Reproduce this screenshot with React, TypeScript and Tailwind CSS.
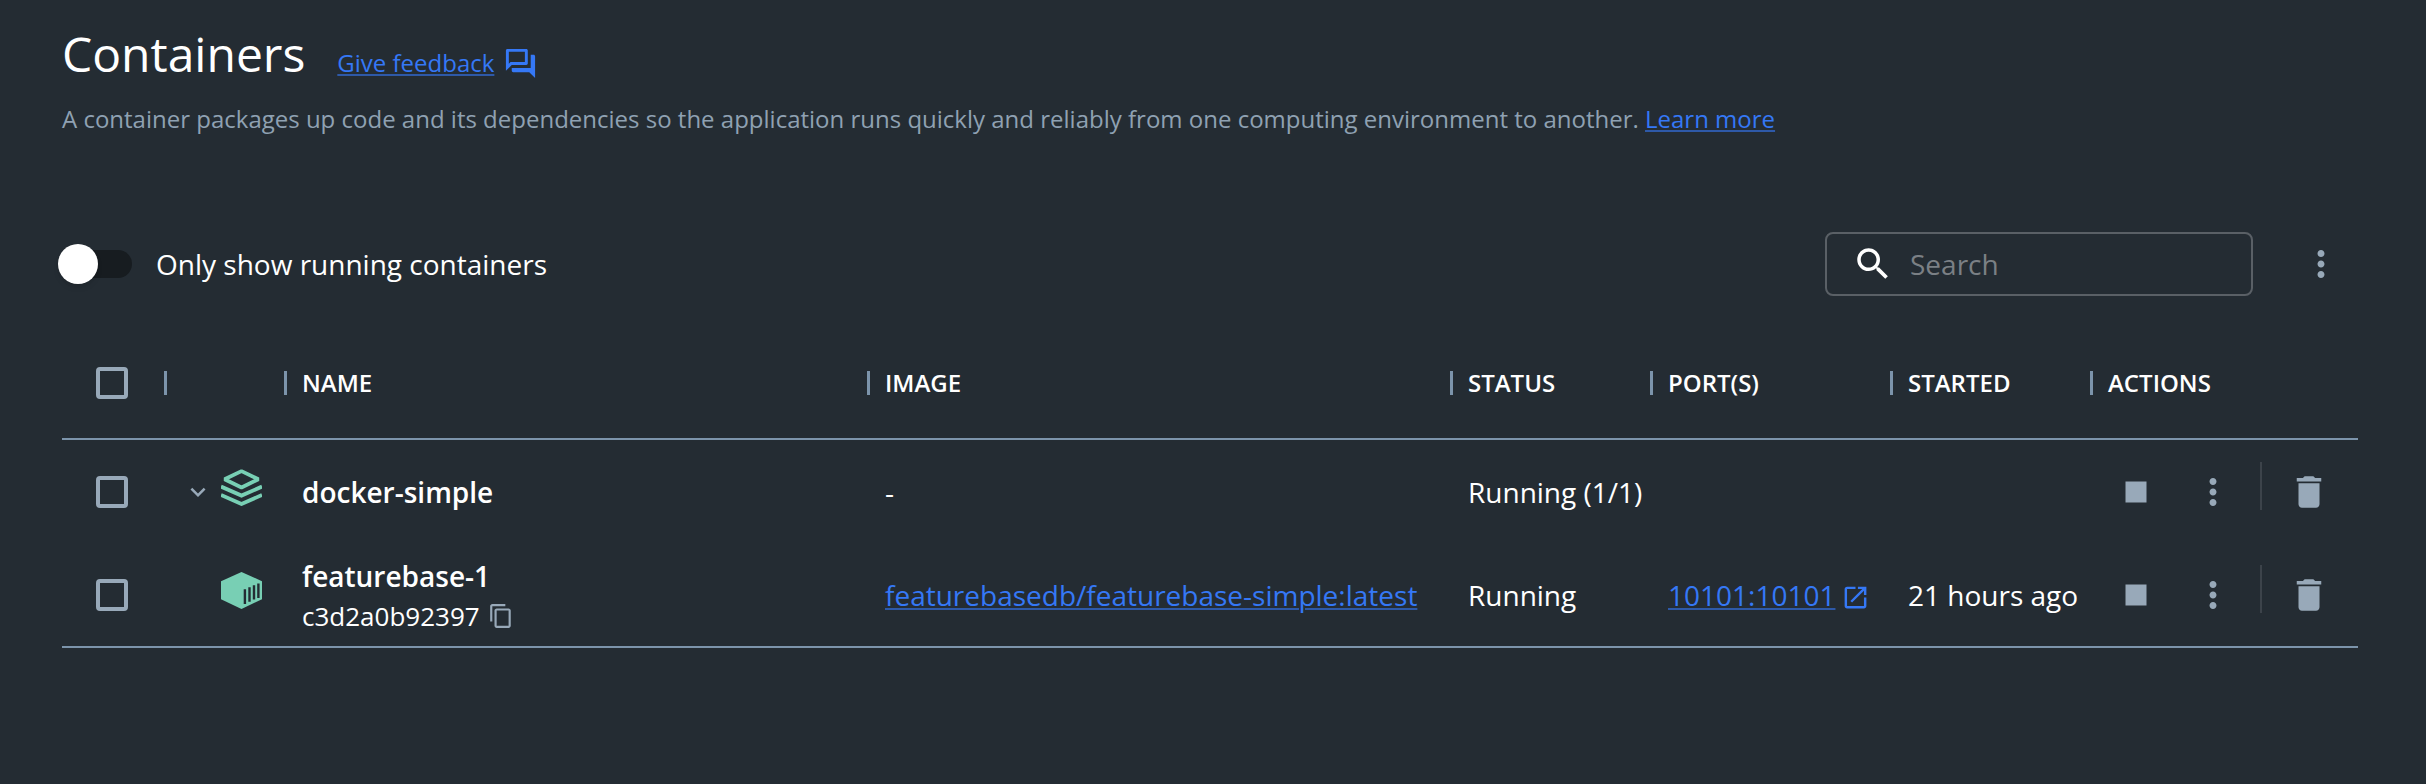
import { useState } from "react";
import type { ReactNode } from "react";

const paths = {
  forum:
    "M15 4v7H5.17L4 12.17V4h11m1-2H3c-.55 0-1 .45-1 1v14l4-4h10c.55 0 1-.45 1-1V3c0-.55-.45-1-1-1zm5 4h-2v9H6v2c0 .55.45 1 1 1h11l4 4V7c0-.55-.45-1-1-1z",
  search:
    "M15.5 14h-.79l-.28-.27C15.41 12.59 16 11.11 16 9.5 16 5.91 13.09 3 9.5 3S3 5.91 3 9.5 5.91 16 9.5 16c1.61 0 3.09-.59 4.23-1.57l.27.28v.79l5 4.99L20.49 19l-4.99-5zm-6 0C7.01 14 5 11.99 5 9.5S7.01 5 9.5 5 14 7.01 14 9.5 11.99 14 9.5 14z",
  more: "M12 8c1.1 0 2-.9 2-2s-.9-2-2-2-2 .9-2 2 .9 2 2 2zm0 2c-1.1 0-2 .9-2 2s.9 2 2 2 2-.9 2-2-.9-2-2-2zm0 6c-1.1 0-2 .9-2 2s.9 2 2 2 2-.9 2-2-.9-2-2-2z",
  stop: "M6 6h12v12H6z",
  trash: "M6 19c0 1.1.9 2 2 2h8c1.1 0 2-.9 2-2V7H6v12zM19 4h-3.5l-1-1h-5l-1 1H5v2h14V4z",
  chevron: "M16.59 8.59 12 13.17 7.41 8.59 6 10l6 6 6-6z",
  copy: "M16 1H4c-1.1 0-2 .9-2 2v14h2V3h12V1zm3 4H8c-1.1 0-2 .9-2 2v14c0 1.1.9 2 2 2h11c1.1 0 2-.9 2-2V7c0-1.1-.9-2-2-2zm0 16H8V7h11v14z",
  launch:
    "M19 19H5V5h7V3H5c-1.11 0-2 .9-2 2v14c0 1.1.89 2 2 2h14c1.1 0 2-.9 2-2v-7h-2v7zM14 3v2h3.59l-9.83 9.83 1.41 1.41L19 6.41V10h2V3h-7z",
};

function Icon({ name, className }: { name: keyof typeof paths; className: string }) {
  return (
    <svg viewBox="0 0 24 24" fill="currentColor" aria-hidden="true" className={`shrink-0 ${className}`}>
      <path d={paths[name]} />
    </svg>
  );
}

function ComposeIcon() {
  return (
    <svg viewBox="0 0 41 37" fill="none" stroke="currentColor" strokeWidth="3.8" aria-hidden="true" className="mb-2 h-[37px] w-[41px] shrink-0 text-[#78cfb4]">
      <path d="M20.5 2.1 37.4 10.3 20.5 18.5 3.6 10.3Z" strokeLinejoin="bevel" />
      <path d="M0 17.6 20.5 26.6 41 17.6" />
      <path d="M0 26 20.5 35 41 26" />
    </svg>
  );
}

function ContainerIcon() {
  return (
    <svg viewBox="0 0 41 37" aria-hidden="true" className="mb-2 h-[37px] w-[41px] shrink-0 text-[#78cfb4]">
      <path fill="currentColor" d="M20.5 0 41 9.2V27.2L20.5 37 0 27.2V9.2Z" />
      <path fill="none" stroke="#242c33" strokeWidth="2.4" d="M23.9 17.2V32M28.5 15.2V29.8M33 13.2V27.6M37.4 11.4V26" />
    </svg>
  );
}

function Checkbox({ label }: { label: string }) {
  return (
    <input
      type="checkbox"
      aria-label={label}
      className="block size-8 appearance-none rounded-[4px] border-4 border-[#98a9b9] checked:bg-[#3578f6]"
    />
  );
}

function IconButton({ label, children }: { label: string; children: ReactNode }) {
  return (
    <button type="button" aria-label={label} className="flex shrink-0 items-center text-[#98a9b9]">
      {children}
    </button>
  );
}

function TextLink({ children }: { children: ReactNode }) {
  return (
    <a href="#" className="text-[#3578f6] underline decoration-[#3578f6]/60 decoration-2 underline-offset-2">
      {children}
    </a>
  );
}

function HeaderCell({ children }: { children?: ReactNode }) {
  return (
    <th scope="col" className="h-[112px] border-b-2 border-[#7c94ab] p-0 text-left font-semibold">
      <div className="flex items-center gap-[15px]">
        <span className="h-6 w-[3px] bg-[#7c94ab]" />
        {children}
      </div>
    </th>
  );
}

function Actions({ name }: { name: string }) {
  return (
    <div className="flex items-center pl-[25px]">
      <IconButton label={`Stop ${name}`}>
        <Icon name="stop" className="size-[42px]" />
      </IconButton>
      <div className="ml-[35px] flex">
        <IconButton label={`More actions for ${name}`}>
          <Icon name="more" className="size-[42px]" />
        </IconButton>
      </div>
      <span className="mx-[26px] mb-3 h-12 w-0.5 bg-[#3c434a]" />
      <IconButton label={`Delete ${name}`}>
        <Icon name="trash" className="size-[42px]" />
      </IconButton>
    </div>
  );
}

export default function App() {
  const [onlyRunning, setOnlyRunning] = useState(false);

  return (
    <main className="min-h-screen bg-[#242c33] pt-[26px] pr-[68px] pl-[62px] font-['Open_Sans','Noto_Sans',sans-serif] text-[28px] leading-10 text-white">
      <header>
        <div className="flex items-baseline gap-8">
          <h1 className="text-[48px] leading-[56px]">Containers</h1>
          <div className="flex items-center gap-[9px] text-[24px] leading-8">
            <TextLink>Give feedback</TextLink>
            <Icon name="forum" className="size-[35px] text-[#3578f6]" />
          </div>
        </div>
        <p className="mt-[21px] text-[24px] leading-8 text-[#8fa1b2]">
          A container packages up code and its dependencies so the application runs quickly and reliably from one
          computing environment to another. <TextLink>Learn more</TextLink>
        </p>
      </header>

      <div className="mt-[97px] flex h-16 items-center">
        <label className="flex items-center gap-6">
          <span className="relative flex h-7 w-[70px] items-center rounded-full bg-[#171c20]">
            <input
              type="checkbox"
              role="switch"
              checked={onlyRunning}
              onChange={(e) => setOnlyRunning(e.target.checked)}
              className="peer absolute inset-0 appearance-none"
            />
            <span className="-ml-1 size-10 rounded-full bg-white shadow-md peer-checked:ml-9" />
          </span>
          Only show running containers
        </label>
        <label className="ml-auto flex h-16 w-[428px] items-center gap-4 rounded-lg border-2 border-[#5a6066] pl-[25px]">
          <Icon name="search" className="size-[42px]" />
          <input
            type="search"
            aria-label="Search"
            placeholder="Search"
            className="min-w-0 flex-1 bg-transparent outline-none placeholder:text-[#7b8085]"
          />
        </label>
        <div className="mr-4 ml-[47px]">
          <IconButton label="More options">
            <Icon name="more" className="size-[42px]" />
          </IconButton>
        </div>
      </div>

      <table className="mt-8 w-full table-fixed border-separate border-spacing-0 text-left">
        <colgroup>
          <col className="w-[102px]" />
          <col className="w-[120px]" />
          <col />
          <col />
          <col className="w-[200px]" />
          <col className="w-[240px]" />
          <col className="w-[200px]" />
          <col className="w-[268px]" />
        </colgroup>
        <thead className="text-[24px] leading-8">
          <tr>
            <th className="border-b-2 border-[#7c94ab] p-0 pl-[34px]">
              <Checkbox label="Select all containers" />
            </th>
            <HeaderCell />
            <HeaderCell>NAME</HeaderCell>
            <HeaderCell>IMAGE</HeaderCell>
            <HeaderCell>STATUS</HeaderCell>
            <HeaderCell>PORT(S)</HeaderCell>
            <HeaderCell>STARTED</HeaderCell>
            <HeaderCell>ACTIONS</HeaderCell>
          </tr>
        </thead>
        <tbody>
          <tr className="*:h-[103px] *:p-0">
            <td>
              <div className="pl-[34px]">
                <Checkbox label="Select docker-simple" />
              </div>
            </td>
            <td>
              <div className="flex items-center gap-2 pl-[19px]">
                <IconButton label="Collapse docker-simple">
                  <Icon name="chevron" className="size-[30px]" />
                </IconButton>
                <ComposeIcon />
              </div>
            </td>
            <td>
              <div className="pl-[18px] font-semibold">docker-simple</div>
            </td>
            <td>
              <div className="pl-[18px]">-</div>
            </td>
            <td>
              <div className="pl-[18px] whitespace-nowrap">Running (1/1)</div>
            </td>
            <td />
            <td />
            <td>
              <Actions name="docker-simple" />
            </td>
          </tr>
          <tr className="*:h-[105px] *:border-b-2 *:border-[#7c94ab] *:p-0">
            <td>
              <div className="pl-[34px]">
                <Checkbox label="Select featurebase-1" />
              </div>
            </td>
            <td>
              <div className="pl-[57px]">
                <ContainerIcon />
              </div>
            </td>
            <td>
              <div className="pt-0.5 pl-[18px]">
                <div className="font-semibold">featurebase-1</div>
                <div className="flex items-center gap-2 text-[26px]">
                  c3d2a0b92397
                  <IconButton label="Copy container ID">
                    <Icon name="copy" className="size-[26px]" />
                  </IconButton>
                </div>
              </div>
            </td>
            <td>
              <div className="pl-[18px] whitespace-nowrap">
                <TextLink>featurebasedb/featurebase-simple:latest</TextLink>
              </div>
            </td>
            <td>
              <div className="pl-[18px]">Running</div>
            </td>
            <td>
              <div className="flex items-center gap-[6px] pl-[18px]">
                <TextLink>10101:10101</TextLink>
                <Icon name="launch" className="mt-[6px] size-[29px] text-[#3578f6]" />
              </div>
            </td>
            <td>
              <div className="pl-[18px] whitespace-nowrap">21 hours ago</div>
            </td>
            <td>
              <Actions name="featurebase-1" />
            </td>
          </tr>
        </tbody>
      </table>
    </main>
  );
}
